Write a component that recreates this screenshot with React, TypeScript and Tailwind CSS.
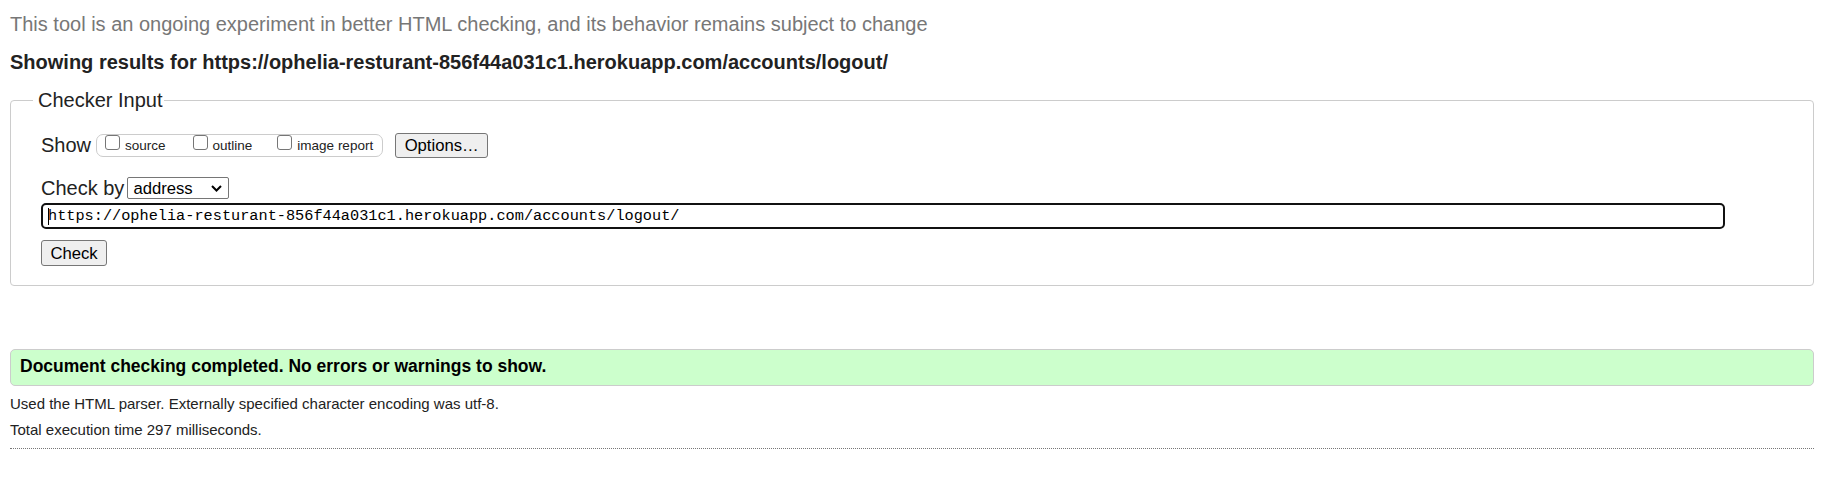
import React from "react";

// Nu HTML checker result page, "no errors" state
const CHECKED_URL = "https://ophelia-resturant-856f44a031c1.herokuapp.com/accounts/logout/";

const Checkbox: React.FC<{ label: string; className?: string }> = ({ label, className }) => (
  <label className={"flex items-start " + (className ?? "")}>
    <input
      type="checkbox"
      className="m-0 h-[15px] w-[15px] appearance-none rounded-[3px] border border-[#767676] bg-white"
    />
    <span className="ml-[5px] pt-[3px] text-[13.5px] leading-[16px] text-[#222]">{label}</span>
  </label>
);

export default function App() {
  return (
    <div className="min-h-[479px] bg-white pl-[10px] pr-[15px] pt-[13px] font-['Liberation_Sans',Arial,sans-serif] text-[#222]">
      <p className="text-[20px] leading-[23px] text-[#777]">
        This tool is an ongoing experiment in better HTML checking, and its behavior remains subject to change
      </p>
      <p className="mt-[15px] text-[20px] font-bold leading-[23px] text-[#222]">
        Showing results for {CHECKED_URL}
      </p>

      <fieldset className="mt-[15px] rounded-[4px] border border-[#ccc] pb-[19px] pl-[22px]">
        <legend className="pl-[5px] pr-[1px] text-[20px] leading-[23px] text-[#222]">Checker Input</legend>
        <div className="pl-[8px]">
          {/* show options */}
          <div className="mt-[21px] flex h-[25px] items-center">
            <span className="text-[20px] leading-[23px]">Show</span>
            <div className="ml-[5px] flex h-[23px] items-start rounded-[7px] border border-[#ccc] pl-[8px] pr-[9px]">
              <Checkbox label="source" />
              <Checkbox label="outline" className="ml-[27px]" />
              <Checkbox label="image report" className="ml-[25px]" />
            </div>
            <button className="ml-[12px] h-[25px] w-[93px] rounded-[3px] border border-[#767676] bg-[#efefef] text-[16.67px] leading-[19px] text-black">
              Options…
            </button>
          </div>

          {/* check by */}
          <div className="mt-[19px] flex h-[22px] items-center">
            <span className="text-[20px] leading-[23px]">Check by</span>
            <div className="ml-[3px] flex h-[22px] w-[102px] items-center rounded-[2px] border border-[#767676] bg-white pl-[5px] pr-[6px]">
              <select className="min-w-0 flex-1 appearance-none bg-transparent text-[16.67px] leading-[19px] text-black outline-none">
                <option>address</option>
              </select>
              <svg width="11" height="7" viewBox="0 0 11 7" fill="none">
                <path d="M1 1l4.5 4.5L10 1" stroke="#000" strokeWidth="2" />
              </svg>
            </div>
          </div>

          {/* url field */}
          <div className="mt-[4px] flex h-[26px] w-[1684px] items-center rounded-[5px] border-2 border-[#111] bg-white pl-[5px]">
            <span className="h-[17px] w-[1px] bg-black" />
            <span className="-ml-[1px] font-['Liberation_Mono',Consolas,monospace] text-[15.25px] leading-[18px] text-black">
              {CHECKED_URL}
            </span>
          </div>

          <button className="mt-[11px] h-[26px] w-[66px] rounded-[3px] border border-[#767676] bg-[#efefef] text-[16.67px] leading-[19px] text-black">
            Check
          </button>
        </div>
      </fieldset>

      <div className="mt-[63px] rounded-[5px] border border-[#ccc] bg-[#ccffcc] pb-[8px] pl-[9px] pt-[6px] text-[17.5px] font-bold leading-[21px] text-black">
        Document checking completed. No errors or warnings to show.
      </div>

      <p className="mt-[9px] text-[15px] leading-[17px] text-[#222]">
        Used the HTML parser. Externally specified character encoding was utf-8.
      </p>
      <p className="mt-[9px] text-[15px] leading-[17px] text-[#222]">Total execution time 297 milliseconds.</p>
      <hr className="mt-[10px] border-0 border-t border-dotted border-[#777]" />
    </div>
  );
}
